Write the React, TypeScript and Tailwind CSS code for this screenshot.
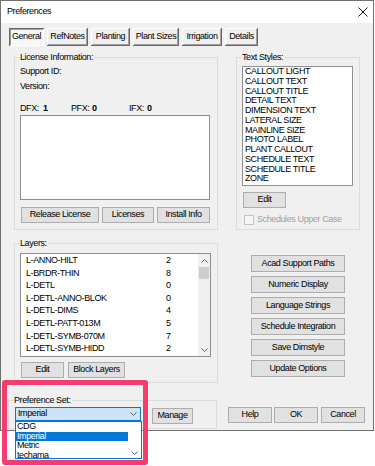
import React from "react";

const tabs = [
  { label: "General", w: "w-[35px]", active: true },
  { label: "RefNotes", w: "w-[41px]" },
  { label: "Planting", w: "w-[39px]" },
  { label: "Plant Sizes", w: "w-[46px]" },
  { label: "Irrigation", w: "w-[40px]" },
  { label: "Details", w: "w-[33px]" },
];

const textStyles = [
  "CALLOUT LIGHT",
  "CALLOUT TEXT",
  "CALLOUT TITLE",
  "DETAIL TEXT",
  "DIMENSION TEXT",
  "LATERAL SIZE",
  "MAINLINE SIZE",
  "PHOTO LABEL",
  "PLANT CALLOUT",
  "SCHEDULE TEXT",
  "SCHEDULE TITLE",
  "ZONE",
];

const layers: [string, string][] = [
  ["L-ANNO-HILT", "2"],
  ["L-BRDR-THIN", "8"],
  ["L-DETL", "0"],
  ["L-DETL-ANNO-BLOK", "0"],
  ["L-DETL-DIMS", "4"],
  ["L-DETL-PATT-013M", "5"],
  ["L-DETL-SYMB-070M", "7"],
  ["L-DETL-SYMB-HIDD", "2"],
];

const sideButtons = [
  "Acad Support Paths",
  "Numeric Display",
  "Language Strings",
  "Schedule Integration",
  "Save Dimstyle",
  "Update Options",
];

const presets = ["CDG", "Imperial", "Metric", "techama"];

function Chevron({ up = false }: { up?: boolean }) {
  return (
    <svg width="7" height="4" viewBox="0 0 7 4" className="block">
      <path
        d={up ? "M0.5 3.5 L3.5 0.5 L6.5 3.5" : "M0.5 0.5 L3.5 3.5 L6.5 0.5"}
        fill="none"
        stroke="#606060"
        strokeWidth="1"
      />
    </svg>
  );
}

function Btn({ className = "", children }: { className?: string; children: React.ReactNode }) {
  return (
    <div
      className={`flex h-[16px] shrink-0 items-center justify-center whitespace-nowrap border border-[#adadad] bg-[#e1e1e1] ${className}`}
    >
      {children}
    </div>
  );
}

function Group({
  label,
  className = "",
  children,
}: {
  label: string;
  className?: string;
  children: React.ReactNode;
}) {
  return (
    <fieldset className={`min-w-0 border border-[#dcdcdc] ${className}`}>
      <legend className="ml-[4px] px-[1px] leading-[10px]">{label}</legend>
      {children}
    </fieldset>
  );
}

export default function App() {
  return (
    <div className="relative h-[466px] w-[375px] overflow-hidden bg-white font-['Liberation_Sans',Arial,sans-serif] text-[9px] tracking-[-0.4px] text-black">
      <div className="flex h-[431px] w-[374px] flex-col border border-[#707070] bg-[#f0f0f0]">
        {/* title bar */}
        <div className="flex h-[22px] shrink-0 items-center justify-between bg-white pl-[6px] pr-[5px]">
          <span>Preferences</span>
          <svg width="10" height="10" viewBox="0 0 10 10" className="block">
            <path d="M0.5 0.5 L9.5 9.5 M9.5 0.5 L0.5 9.5" stroke="#111" strokeWidth="1" />
          </svg>
        </div>

        {/* tabs */}
        <div className="mt-[5px] flex gap-[3px] pl-[8px]">
          {tabs.map((t) => (
            <div
              key={t.label}
              className={`flex h-[18px] items-center justify-center whitespace-nowrap ${t.w} ${
                t.active
                  ? "bg-[#f7f7f7] shadow-[inset_1px_1px_#696969,inset_-1px_-1px_#ffffff,inset_2px_2px_#a0a0a0]"
                  : "shadow-[inset_-1px_-1px_#696969,inset_1px_1px_#ffffff,inset_-2px_-2px_#a0a0a0]"
              }`}
            >
              {t.label}
            </div>
          ))}
        </div>

        <div className="flex flex-col pl-[13px]">
          {/* row 1 */}
          <div className="mt-[6px] flex items-stretch">
            <Group label="License Information:" className="w-[204px] pb-[6px]">
              <div className="mt-[4px] pl-[5px] leading-[10px]">Support ID:</div>
              <div className="mt-[5px] pl-[5px] leading-[10px]">Version:</div>
              <div className="mt-[12px] flex pl-[5px] leading-[10px]">
                <span className="w-[23px]">DFX:</span>
                <span className="w-[28px] font-bold">1</span>
                <span className="w-[21px]">PFX:</span>
                <span className="w-[37px] font-bold">0</span>
                <span className="w-[18px]">IFX:</span>
                <span className="font-bold">0</span>
              </div>
              <div className="ml-[5px] mt-[2px] h-[85px] w-[190px] border border-[#8f8f8f] bg-white" />
              <div className="ml-[6px] mt-[7px] flex gap-[3px]">
                <Btn className="w-[78px]">Release License</Btn>
                <Btn className="w-[52px]">Licenses</Btn>
                <Btn className="w-[53px]">Install Info</Btn>
              </div>
            </Group>

            <Group label="Text Styles:" className="ml-[18px] w-[124px]">
              <div className="ml-[5px] mt-[4px] h-[120px] w-[111px] border border-[#8f8f8f] bg-white px-[2px]">
                {textStyles.map((s) => (
                  <div key={s} className="whitespace-nowrap leading-[9.75px]">
                    {s}
                  </div>
                ))}
              </div>
              <Btn className="ml-[6px] mt-[6px] w-[43px]">Edit</Btn>
              <div className="ml-[7px] mt-[5px] flex items-center gap-[3px] text-[#a0a0a0]">
                <div className="h-[10px] w-[10px] border border-[#c4c4c4] bg-[#f7f7f7]" />
                <span className="whitespace-nowrap">Schedules Upper Case</span>
              </div>
            </Group>
          </div>

          {/* row 2 */}
          <div className="mt-[8px] flex">
            <Group label="Layers:" className="w-[204px] pb-[4px]">
              <div className="ml-[5px] mt-[5px] flex h-[104px] w-[191px] border border-[#8f8f8f] bg-white">
                <div className="flex-1 pl-[5px]">
                  {layers.map(([name, n]) => (
                    <div key={name} className="flex leading-[12.6px]">
                      <span className="w-[140px]">{name}</span>
                      <span>{n}</span>
                    </div>
                  ))}
                </div>
                <div className="flex w-[12px] flex-col bg-[#f0f0f0]">
                  <div className="flex h-[13px] items-center justify-center">
                    <Chevron up />
                  </div>
                  <div className="mx-[1px] h-[12px] bg-[#cdcdcd]" />
                  <div className="flex-1" />
                  <div className="flex h-[13px] items-center justify-center">
                    <Chevron />
                  </div>
                </div>
              </div>
              <div className="ml-[6px] mt-[5px] flex gap-[4px]">
                <Btn className="w-[43px]">Edit</Btn>
                <Btn className="w-[57px]">Block Layers</Btn>
              </div>
            </Group>

            <div className="ml-[33px] flex flex-col gap-[4px] pt-[17px]">
              {sideButtons.map((b) => (
                <Btn key={b} className="h-[17px] w-[94px]">
                  {b}
                </Btn>
              ))}
            </div>
          </div>

          {/* row 3 */}
          <div className="mt-[12px] flex items-start">
            <Group label="Preference Set:" className="-ml-[6px] w-[209px] pb-[4px]">
              <div className="ml-[6px] mt-[2px] flex items-start">
                <div className="relative">
                  <div className="flex h-[14px] w-[126px] items-center justify-between border border-[#0078d7] bg-[#cce4f7] pl-[2px] pr-[3px]">
                    <span>Imperial</span>
                    <Chevron />
                  </div>
                  <div className="absolute left-0 top-full z-10 flex h-[38px] w-[127px] border border-[#0078d7] bg-white">
                    <div className="flex-1">
                      {presets.map((p) => (
                        <div
                          key={p}
                          className={`pl-[1px] leading-[9.5px] ${
                            p === "Imperial" ? "bg-[#0078d7] text-white" : ""
                          }`}
                        >
                          {p}
                        </div>
                      ))}
                    </div>
                    <div className="flex w-[13px] flex-col justify-end pb-[3px]">
                      <div className="flex justify-center">
                        <Chevron />
                      </div>
                    </div>
                  </div>
                </div>
                <Btn className="ml-[11px] mt-[1px] h-[15px] w-[41px]">Manage</Btn>
              </div>
            </Group>

            <div className="ml-[11px] mt-[12px] flex">
              <Btn className="w-[44px]">Help</Btn>
              <Btn className="ml-[2px] w-[44px]">OK</Btn>
              <Btn className="ml-[3px] w-[44px]">Cancel</Btn>
            </div>
          </div>
        </div>
      </div>

      {/* highlight annotation */}
      <div className="pointer-events-none absolute left-[2px] top-[380px] h-[85px] w-[146px] rounded-[3px] border-[5px] border-[#f23d6f]" />
    </div>
  );
}
